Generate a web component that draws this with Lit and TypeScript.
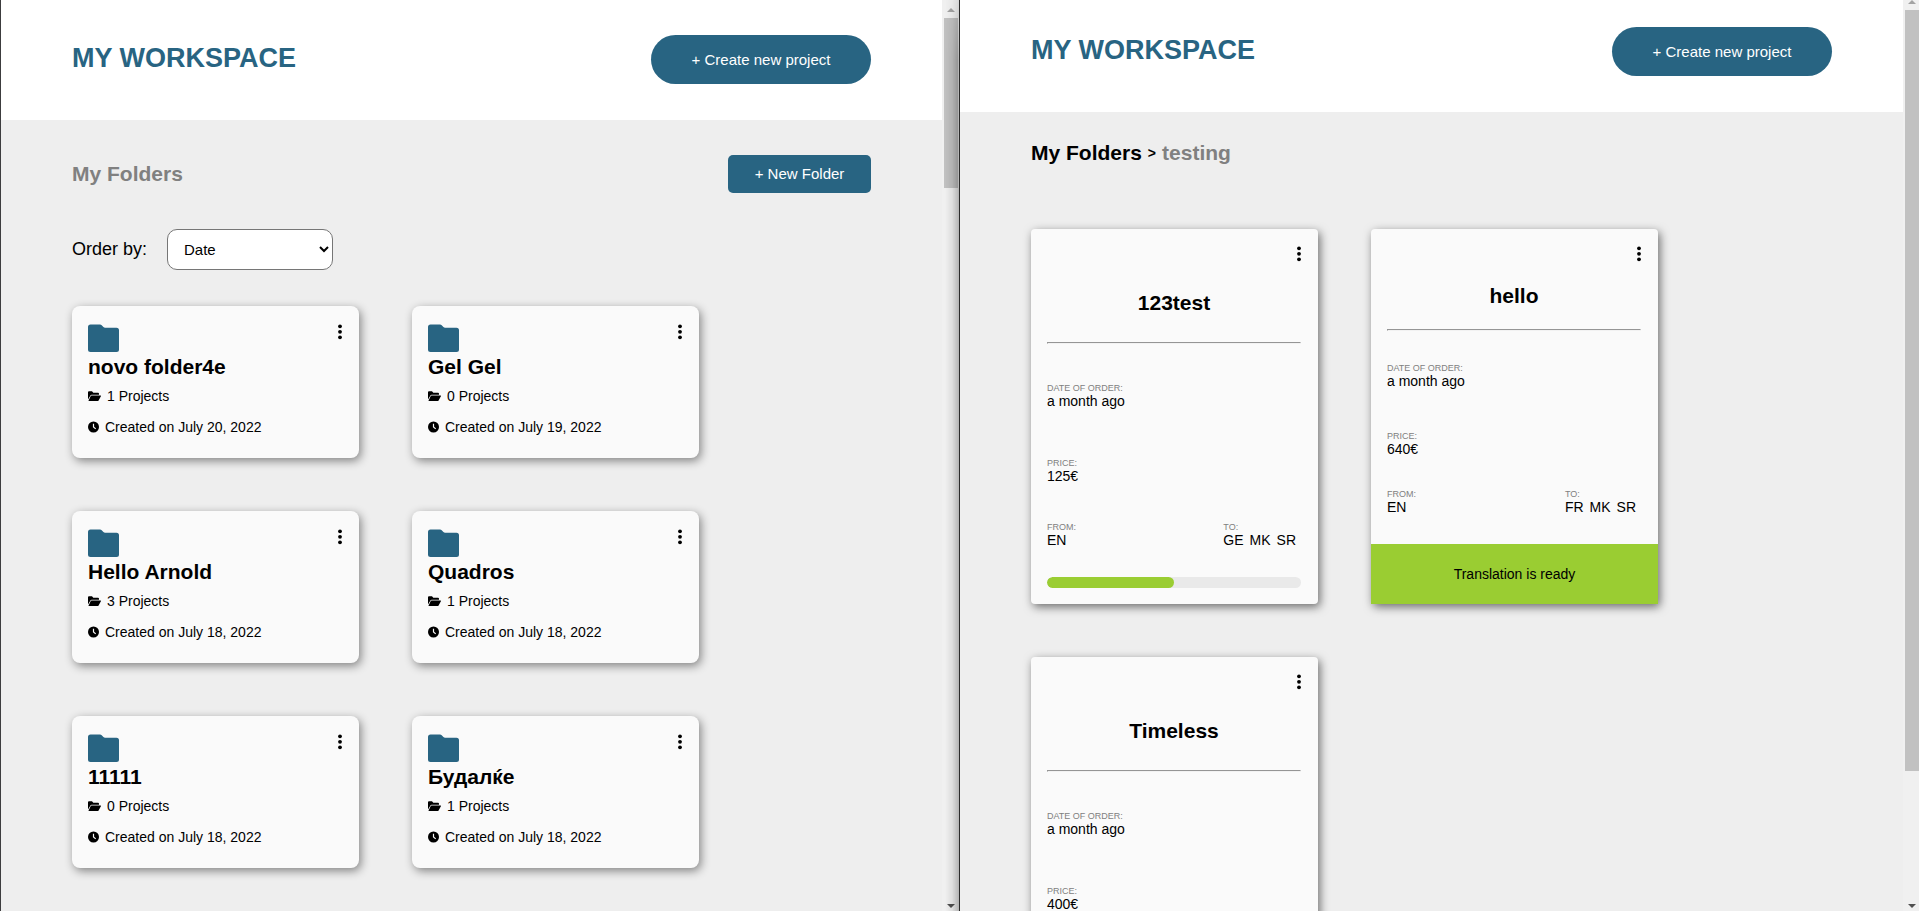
import { LitElement, html, css } from "lit";
import { customElement, property } from "lit/decorators.js";

interface Folder {
  name: string;
  projects: number;
  created: string;
}

interface Project {
  name: string;
  date: string;
  price: string;
  from: string;
  to: string[];
  progress?: number;
}

const folders: Folder[] = [
  { name: "novo folder4e", projects: 1, created: "July 20, 2022" },
  { name: "Gel Gel", projects: 0, created: "July 19, 2022" },
  { name: "Hello Arnold", projects: 3, created: "July 18, 2022" },
  { name: "Quadros", projects: 1, created: "July 18, 2022" },
  { name: "11111", projects: 0, created: "July 18, 2022" },
  { name: "Будалќе", projects: 1, created: "July 18, 2022" },
];

const projects: Project[] = [
  { name: "123test", date: "a month ago", price: "125€", from: "EN", to: ["GE", "MK", "SR"], progress: 50 },
  { name: "hello", date: "a month ago", price: "640€", from: "EN", to: ["FR", "MK", "SR"] },
  { name: "Timeless", date: "a month ago", price: "400€", from: "EN", to: ["GE", "MK"], progress: 50 },
];

const menuButton = () => html`
  <button class="menu" aria-label="More options">
    <svg width="6" height="17" viewBox="0 0 6 17">
      <circle cx="3" cy="2.3" r="1.9" /><circle cx="3" cy="7.8" r="1.9" /><circle cx="3" cy="13.3" r="1.9" />
    </svg>
  </button>
`;

const shared = css`
  *,
  *::before {
    box-sizing: border-box;
  }
  h1,
  h2,
  h3,
  p,
  dl,
  dd {
    margin: 0;
  }
  button {
    border: 0;
    font-family: inherit;
    cursor: pointer;
  }
  .menu {
    display: block;
    padding: 0;
    background: none;
  }
  .menu svg {
    display: block;
  }
`;

@customElement("scroll-track")
class ScrollTrack extends LitElement {
  @property({ type: Number }) size = 20;
  @property({ type: Boolean, reflect: true }) scrolled = false;

  static styles = css`
    :host {
      display: flex;
      flex-direction: column;
      flex: none;
      width: 17px;
      box-sizing: border-box;
      padding: 8px 1px 3px 2px;
      background: #f0f0f0;
    }
    :host([scrolled]) {
      width: 16px;
      padding: 0 0 3px 2px;
    }
    svg {
      display: block;
      flex: none;
      align-self: center;
    }
    .rail {
      flex: 1;
      margin: 6px 0;
    }
    .thumb {
      background: #c1c1c1;
    }
  `;

  render() {
    return html`
      <svg width="8" height="4" viewBox="0 0 8 4" fill="#a3a3a3"><path d="M0 4 4 0l4 4z" /></svg>
      <div class="rail"><div class="thumb" style="height:${this.size}%"></div></div>
      <svg width="8" height="4" viewBox="0 0 8 4" fill="#505050"><path d="M0 0h8L4 4z" /></svg>
    `;
  }
}

@customElement("folder-card")
class FolderCard extends LitElement {
  @property({ attribute: false }) folder!: Folder;

  static styles = [
    shared,
    css`
      :host {
        display: block;
        padding: 18px 16px 22px;
        border-radius: 8px;
        background: #fafafa;
        box-shadow: 2px 3px 10px rgba(0, 0, 0, 0.45);
      }
      .top {
        display: flex;
        justify-content: space-between;
        align-items: flex-start;
      }
      .folder {
        display: block;
        fill: #286482;
      }
      h3 {
        margin-top: 3px;
        font-size: 21px;
        line-height: 24px;
      }
      .meta {
        display: flex;
        align-items: center;
        gap: 6px;
        margin-top: 8px;
        font-size: 14px;
        line-height: 18px;
      }
      .meta + .meta {
        margin-top: 13px;
      }
    `,
  ];

  render() {
    const { name, projects: count, created } = this.folder;
    return html`
      <div class="top">
        <svg class="folder" width="31" height="28" viewBox="0 0 31 28">
          <path d="M2.500.5h9.500q1 0 1.700.7l1.700 1.900q.7.700 1.700.700H28.500Q31 3.800 31 6.300V25.500Q31 28 28.500 28H2.500Q0 28 0 25.500V3Q0 .5 2.500.5z" />
        </svg>
        ${menuButton()}
      </div>
      <h3>${name}</h3>
      <p class="meta">
        <svg width="13" height="11" viewBox="0 0 13 11">
          <path d="M0 1.200Q0 .2 1 .2h3l1.300 1.500h4.700q1 0 1 1v1H3.600q-.8 0-1.200.7L0 8.500z" />
          <path d="M3.600 4.500h8.900q.7 0 .4.700l-2.300 4.200q-.4.700-1.200.7H1q-.8 0-.4-.700l2-4.200q.3-.700 1-.700z" />
        </svg>
        ${count} Projects
      </p>
      <p class="meta">
        <svg width="11" height="12" viewBox="0 0 11 12">
          <circle cx="5.500" cy="6" r="5.500" />
          <path d="M5.500 2.800V6l2.200 1.900" fill="none" stroke="#fafafa" stroke-width="1.200" />
        </svg>
        Created on ${created}
      </p>
    `;
  }
}

@customElement("project-card")
class ProjectCard extends LitElement {
  @property({ attribute: false }) project!: Project;

  static styles = [
    shared,
    css`
      :host {
        display: flex;
        flex-direction: column;
        min-height: 375px;
        box-sizing: border-box;
        border-radius: 4px;
        background: #fafafa;
        box-shadow: 2px 3px 10px rgba(0, 0, 0, 0.55);
      }
      .body {
        display: flex;
        flex: 1;
        flex-direction: column;
        justify-content: space-between;
        padding: 17px 17px 16px 16px;
      }
      .ready-body {
        padding-bottom: 29px;
      }
      .menu {
        align-self: flex-end;
        margin-right: -1px;
      }
      h3 {
        font-size: 21px;
        line-height: 22px;
        text-align: center;
      }
      hr {
        width: 100%;
        margin: 0 0 10px;
        border: 1px solid #f2f2f2;
        border-top-color: #959595;
        border-left-color: #959595;
      }
      .date {
        margin-bottom: 20px;
      }
      .price {
        margin-bottom: 10px;
      }
      dt {
        color: #808080;
        font-size: 9px;
        line-height: 10px;
        text-transform: uppercase;
      }
      dd {
        display: flex;
        gap: 6px;
        font-size: 14px;
        line-height: 16px;
      }
      .languages {
        display: flex;
        justify-content: space-between;
      }
      .target {
        padding-right: 5px;
      }
      .bar {
        height: 11px;
        border-radius: 6px;
        background: #e9e9e9;
        overflow: hidden;
      }
      .fill {
        height: 100%;
        border-radius: 6px;
        background: #9acd32;
      }
      .ready {
        padding: 21px 16px;
        background: #9acd32;
        font-size: 14px;
        line-height: 18px;
        text-align: center;
      }
    `,
  ];

  render() {
    const p = this.project;
    const running = p.progress !== undefined;
    return html`
      <div class="body ${running ? "" : "ready-body"}">
        ${menuButton()}
        <h3>${p.name}</h3>
        <hr />
        <dl class="date"><dt>Date of order:</dt><dd>${p.date}</dd></dl>
        <dl class="price"><dt>Price:</dt><dd>${p.price}</dd></dl>
        <div class="languages">
          <dl><dt>From:</dt><dd>${p.from}</dd></dl>
          <dl class="target"><dt>To:</dt><dd>${p.to.map((code) => html`<span>${code}</span>`)}</dd></dl>
        </div>
        ${running
          ? html`<div class="bar" role="progressbar" aria-label="Progress" aria-valuenow=${p.progress!}>
              <div class="fill" style="width:${p.progress}%"></div>
            </div>`
          : null}
      </div>
      ${running ? null : html`<p class="ready">Translation is ready</p>`}
    `;
  }
}

@customElement("app-root")
class AppRoot extends LitElement {
  static styles = [
    shared,
    css`
      :host {
        display: flex;
        height: 100vh;
        overflow: hidden;
        background: #eeeeee;
        color: #000;
        font-family: "Liberation Sans", Arial, sans-serif;
      }
      .pane {
        display: flex;
        min-width: 0;
      }
      .first {
        flex: none;
        width: round(up, 50%, 1px);
        border-left: 1px solid #3c3c3e;
        border-right: 1px solid #2b2b2b;
        position: relative;
      }
      .first::before {
        content: "";
        position: absolute;
        z-index: 1;
        top: 0;
        right: 0;
        bottom: 0;
        width: 14px;
        background: linear-gradient(to right, transparent, rgba(0, 0, 0, 0.07) 50%, rgba(0, 0, 0, 0.25));
        mask-image: linear-gradient(rgba(0, 0, 0, 0.4), #000 60px);
      }
      .second {
        flex: 1;
      }
      .view {
        flex: 1;
        min-width: 0;
        overflow: hidden;
      }
      header {
        display: flex;
        justify-content: space-between;
        align-items: center;
        padding: 35px 71px 36px;
        background: #fff;
      }
      .second header {
        padding-top: 27px;
      }
      h1 {
        padding-bottom: 3px;
        color: #286482;
        font-size: 27px;
        line-height: 32px;
      }
      .create,
      .new {
        background: #286482;
        color: #fff;
        font-size: 15px;
        line-height: 17px;
      }
      .create {
        width: 220px;
        padding: 16px;
        border-radius: 25px;
      }
      .new {
        width: 143px;
        padding: 10px 16px 11px;
        border-radius: 5px;
      }
      main {
        padding: 35px 71px;
      }
      .heading {
        display: flex;
        justify-content: space-between;
        align-items: center;
      }
      h2 {
        color: #808080;
        font-size: 21px;
        line-height: 24px;
      }
      .order {
        display: flex;
        align-items: center;
        gap: 20px;
        margin: 36px 0;
      }
      label {
        padding-bottom: 2px;
        font-size: 18px;
        line-height: 20px;
      }
      select {
        width: 166px;
        height: 41px;
        padding: 0 0 0 12px;
        border: 1px solid #767676;
        border-radius: 10px;
        background: #fff;
        color: #000;
        font-family: inherit;
        font-size: 15px;
      }
      .grid {
        display: grid;
        grid-template-columns: repeat(auto-fill, 287px);
        gap: 53px;
      }
      .second main {
        padding-top: 29px;
      }
      .crumbs {
        display: flex;
        align-items: center;
        gap: 6px;
        margin-bottom: 64px;
        font-size: 14px;
        font-weight: bold;
      }
      .crumbs a {
        color: #000;
        font-size: 21px;
        line-height: 24px;
        text-decoration: none;
      }
    `,
  ];

  render() {
    return html`
      <section class="pane first">
        <div class="view">
          <header>
            <h1>MY WORKSPACE</h1>
            <button class="create">+ Create new project</button>
          </header>
          <main>
            <div class="heading">
              <h2>My Folders</h2>
              <button class="new">+ New Folder</button>
            </div>
            <div class="order">
              <label for="order">Order by:</label>
              <select id="order"><option>Date</option><option>Name</option></select>
            </div>
            <div class="grid">${folders.map((f) => html`<folder-card .folder=${f}></folder-card>`)}</div>
          </main>
        </div>
        <scroll-track .size=${19.3}></scroll-track>
      </section>
      <section class="pane second">
        <div class="view">
          <header>
            <h1>MY WORKSPACE</h1>
            <button class="create">+ Create new project</button>
          </header>
          <main>
            <nav class="crumbs" aria-label="Breadcrumb">
              <a href="#">My Folders</a>
              <span>&gt;</span>
              <h2>testing</h2>
            </nav>
            <div class="grid">${projects.map((p) => html`<project-card .project=${p}></project-card>`)}</div>
          </main>
        </div>
        <scroll-track scrolled .size=${85.7}></scroll-track>
      </section>
    `;
  }
}
